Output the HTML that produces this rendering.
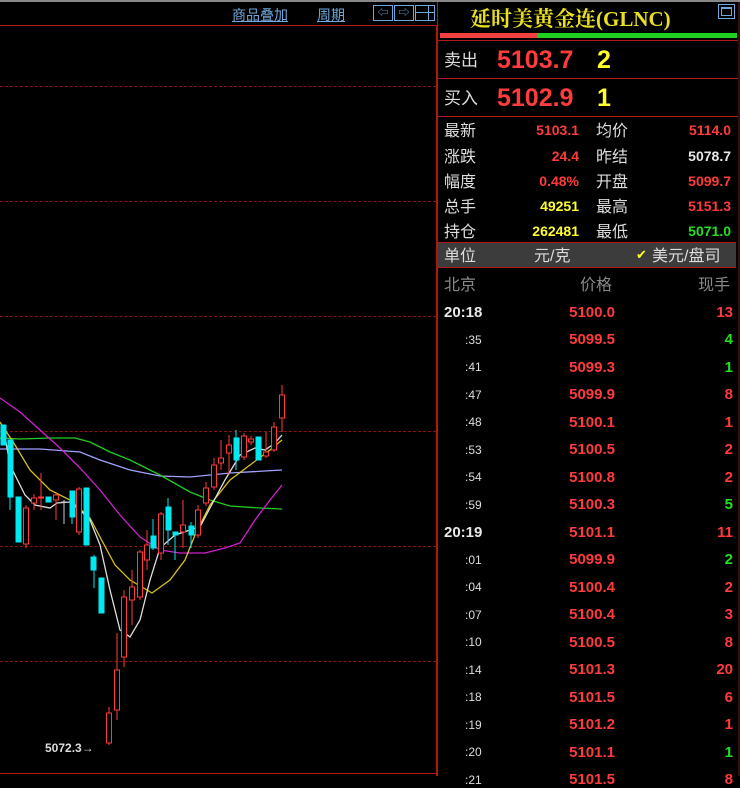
<!DOCTYPE html>
<html><head><meta charset="utf-8"><style>
body{margin:0;background:#000;width:740px;height:776px;overflow:hidden;position:relative;font-family:"Liberation Sans","Noto Sans CJK SC",sans-serif;}
.a{position:absolute;white-space:nowrap;}
.hl{position:absolute;height:0;border-top:1px dashed #8a1414;left:0;width:436px;}
.lab{font-size:16px;color:#ddd;margin-top:-3px}
.v{font-size:14px;font-weight:bold;text-align:right;}
.r{color:#ff3b3b}.y{color:#ffff2a}.g{color:#22e022}.w{color:#e8e8e8}
.t{font-size:12px;color:#ddd;left:465px;margin-top:2px}
.p{font-size:15px;font-weight:bold;color:#ff3b3b;width:120px;left:495px;text-align:right;margin-top:2px}
.q{font-size:15px;font-weight:bold;width:60px;left:673px;text-align:right;margin-top:2px}
.tm{left:444px;font-size:15px;font-weight:bold;color:#e8e8e8;margin-top:2px}
</style></head><body>
<div class="a" style="left:0;top:0;width:740px;height:2px;background:#888"></div>
<div class="a" style="left:232px;top:5px;font-size:14px;color:#6fa8dc;text-decoration:underline">商品叠加</div>
<div class="a" style="left:317px;top:5px;font-size:14px;color:#6fa8dc;text-decoration:underline">周期</div>
<div class="a" style="left:373px;top:5px;width:18px;height:14px;border:1px solid #6fa8dc;color:#6fa8dc;font-size:11px;line-height:14px;text-align:center">⇦</div>
<div class="a" style="left:394px;top:5px;width:18px;height:14px;border:1px solid #6fa8dc;color:#6fa8dc;font-size:11px;line-height:14px;text-align:center">⇨</div>
<div class="a" style="left:415px;top:5px;width:18px;height:14px;border:1px solid #6fa8dc"><div style="position:absolute;left:0;top:6px;width:18px;border-top:1px solid #6fa8dc"></div><div style="position:absolute;left:12px;top:0;height:14px;border-left:1px solid #6fa8dc"></div></div>
<div class="a" style="left:0;top:25px;width:437px;height:1px;background:#b01818"></div>
<div class="hl" style="top:86px"></div><div class="hl" style="top:201px"></div><div class="hl" style="top:316px"></div>
<div class="hl" style="top:431px"></div><div class="hl" style="top:546px"></div><div class="hl" style="top:661px"></div>
<div class="a" style="left:436px;top:25px;width:1px;height:751px;background:#b01818"></div>
<div class="a" style="left:0;top:773px;width:437px;height:1px;background:#b01818"></div>
<svg class="a" style="left:0;top:0" width="437" height="776">
<g fill="none" stroke-width="1.3">
<polyline stroke="#a0a0ff" points="0,449 40,449 80,452 100,460 130,470 160,476 190,477 230,473 282,470"/>
<polyline stroke="#22cc22" points="0,438 20,439 50,438 75,438 90,442 110,452 130,460 160,475 190,492 210,500 230,506 260,508 282,509"/>
<polyline stroke="#d020d0" points="0,398 20,412 40,430 60,448 80,468 100,490 120,515 140,537 160,550 180,553 205,553 225,548 240,543 255,520 270,500 282,485"/>
<polyline stroke="#d8c020" points="0,422 15,445 30,470 50,490 70,500 90,518 100,537 115,565 130,580 152,593 170,580 185,560 195,535 210,505 230,480 250,465 270,450 282,440"/>
<polyline stroke="#dddddd" points="3,425 10,465 25,495 35,505 50,508 57,503 70,502 80,510 90,520 100,545 110,590 120,630 130,637 140,620 150,580 160,548 175,535 190,530 200,527 210,508 225,480 240,455 255,448 265,450 275,443 282,435"/>
</g>
<g stroke="#ff3b3b" fill="#000">
<line x1="26" y1="505" x2="26" y2="548"/><rect x="23.5" y="508" width="5" height="36"/>
<line x1="34" y1="494" x2="34" y2="510"/><rect x="31.5" y="498" width="5" height="5"/>
<line x1="41" y1="473" x2="41" y2="510"/><rect x="38.5" y="497" width="5" height="1"/>
<line x1="56" y1="493" x2="56" y2="520"/><rect x="53.5" y="495" width="5" height="5"/>
<line x1="79" y1="487" x2="79" y2="535"/><rect x="76.5" y="489" width="5" height="43"/>
<line x1="109" y1="707" x2="109" y2="745"/><rect x="106.5" y="713" width="5" height="30"/>
<line x1="117" y1="633" x2="117" y2="720"/><rect x="114.5" y="670" width="5" height="40"/>
<line x1="124" y1="590" x2="124" y2="667"/><rect x="121.5" y="597" width="5" height="60"/>
<line x1="132" y1="570" x2="132" y2="625"/><rect x="129.5" y="587" width="5" height="13"/>
<line x1="140" y1="550" x2="140" y2="600"/><rect x="137.5" y="552" width="5" height="45"/>
<line x1="147" y1="530" x2="147" y2="570"/><rect x="144.5" y="545" width="5" height="15"/>
<line x1="161" y1="512" x2="161" y2="560"/><rect x="158.5" y="514" width="5" height="39"/>
<line x1="183" y1="500" x2="183" y2="548"/><rect x="180.5" y="525" width="5" height="7"/>
<line x1="198" y1="505" x2="198" y2="538"/><rect x="195.5" y="510" width="5" height="25"/>
<line x1="206" y1="482" x2="206" y2="506"/><rect x="203.5" y="488" width="5" height="15"/>
<line x1="214" y1="458" x2="214" y2="490"/><rect x="211.5" y="465" width="5" height="22"/>
<line x1="221" y1="440" x2="221" y2="470"/><rect x="218.5" y="458" width="5" height="5"/>
<line x1="229" y1="435" x2="229" y2="475"/><rect x="226.5" y="445" width="5" height="8"/>
<line x1="244" y1="433" x2="244" y2="460"/><rect x="241.5" y="436" width="5" height="21"/>
<line x1="251" y1="436" x2="251" y2="445"/><rect x="248.5" y="439" width="5" height="3"/>
<line x1="266" y1="432" x2="266" y2="458"/><rect x="263.5" y="452" width="5" height="4"/>
<line x1="274" y1="422" x2="274" y2="452"/><rect x="271.5" y="427" width="5" height="23"/>
<line x1="282" y1="385" x2="282" y2="432"/><rect x="279.5" y="395" width="5" height="23"/>
</g>
<g fill="#00e8f0" stroke="#00e8f0">
<rect x="1" y="425" width="5" height="20"/>
<line x1="10" y1="440" x2="10" y2="510"/><rect x="8" y="440" width="5" height="57"/>
<rect x="16" y="497" width="5" height="45"/>
<rect x="46" y="497" width="5" height="5"/>
<rect x="70" y="491" width="5" height="26"/><line x1="72" y1="517" x2="72" y2="524"/>
<rect x="84" y="488" width="5" height="57"/>
<line x1="94" y1="555" x2="94" y2="588"/><rect x="91" y="557" width="5" height="13"/>
<rect x="99" y="578" width="5" height="35"/>
<line x1="153" y1="519" x2="153" y2="550"/><rect x="151" y="536" width="5" height="12"/>
<line x1="168" y1="498" x2="168" y2="545"/><rect x="166" y="507" width="5" height="23"/>
<line x1="175" y1="532" x2="175" y2="560"/><rect x="173" y="532" width="5" height="3"/>
<line x1="191" y1="522" x2="191" y2="548"/><rect x="189" y="526" width="5" height="9"/>
<line x1="236" y1="430" x2="236" y2="470"/><rect x="234" y="438" width="5" height="22"/>
<rect x="256" y="437" width="5" height="23"/>
</g>
<line x1="64" y1="500" x2="64" y2="524" stroke="#ccc"/><line x1="61" y1="502" x2="67" y2="502" stroke="#ccc"/>
</svg>
<div class="a" style="left:45px;top:741px;font-size:12px;font-weight:bold;color:#ddd">5072.3→</div>
<div class="a" style="left:437px;top:2px;width:1px;height:774px;background:#b01818"></div>
<div class="a" style="left:738px;top:2px;width:2px;height:774px;background:#3a0a0a"></div>
<div class="a" style="left:470px;top:3px;font-size:21px;color:#e8e020;font-family:'Liberation Serif','Noto Serif CJK SC',serif;font-weight:bold">延时美黄金连(GLNC)</div>
<div class="a" style="left:718px;top:4px;width:15px;height:13px;border:1px solid #6fa8dc"><div style="margin:2px;height:6px;border:1px solid #6fa8dc;border-top-width:2px"></div></div>
<div class="a" style="left:440px;top:33px;width:97px;height:5px;background:#f04040"></div>
<div class="a" style="left:537px;top:33px;width:200px;height:5px;background:#20d020"></div>
<div class="a" style="left:438px;top:40px;width:300px;height:1px;background:#b01818"></div>
<div class="a" style="left:438px;top:78px;width:300px;height:1px;background:#b01818"></div>
<div class="a" style="left:438px;top:116px;width:300px;height:1px;background:#b01818"></div>
<div class="a lab" style="left:444px;top:49px;font-size:17px">卖出</div>
<div class="a r" style="left:497px;top:46px;font-size:25px;font-weight:bold">5103.7</div>
<div class="a y" style="left:597px;top:46px;font-size:25px;font-weight:bold">2</div>
<div class="a lab" style="left:444px;top:87px;font-size:17px">买入</div>
<div class="a r" style="left:497px;top:84px;font-size:25px;font-weight:bold">5102.9</div>
<div class="a y" style="left:597px;top:84px;font-size:25px;font-weight:bold">1</div>

<div class="a lab" style="left:444px;top:120px">最新</div><div class="a v r" style="left:499px;top:122px;width:80px">5103.1</div>
<div class="a lab" style="left:596px;top:120px">均价</div><div class="a v r" style="left:651px;top:122px;width:80px">5114.0</div>
<div class="a lab" style="left:444px;top:146px">涨跌</div><div class="a v r" style="left:499px;top:148px;width:80px">24.4</div>
<div class="a lab" style="left:596px;top:146px">昨结</div><div class="a v w" style="left:651px;top:148px;width:80px">5078.7</div>
<div class="a lab" style="left:444px;top:171px">幅度</div><div class="a v r" style="left:499px;top:173px;width:80px">0.48%</div>
<div class="a lab" style="left:596px;top:171px">开盘</div><div class="a v r" style="left:651px;top:173px;width:80px">5099.7</div>
<div class="a lab" style="left:444px;top:196px">总手</div><div class="a v y" style="left:499px;top:198px;width:80px">49251</div>
<div class="a lab" style="left:596px;top:196px">最高</div><div class="a v r" style="left:651px;top:198px;width:80px">5151.3</div>
<div class="a lab" style="left:444px;top:221px">持仓</div><div class="a v y" style="left:499px;top:223px;width:80px">262481</div>
<div class="a lab" style="left:596px;top:221px">最低</div><div class="a v g" style="left:651px;top:223px;width:80px">5071.0</div>

<div class="a" style="left:438px;top:242px;width:298px;height:24px;background:#3c3c3c;border-top:1px solid #b01818;border-bottom:1px solid #b01818"></div>
<div class="a lab" style="left:444px;top:245px">单位</div>
<div class="a lab" style="left:534px;top:245px">元/克</div>
<div class="a y" style="left:636px;top:247px;font-size:13px">✔</div>
<div class="a lab" style="left:652px;top:245px">美元/盘司</div>
<div class="a" style="left:444px;top:271px;font-size:16px;color:#888">北京</div>
<div class="a" style="left:580px;top:271px;font-size:16px;color:#888">价格</div>
<div class="a" style="left:698px;top:271px;font-size:16px;color:#888">现手</div>

<div class="a tm" style="top:302px">20:18</div><div class="a p" style="top:302px">5100.0</div><div class="a q r" style="top:302px">13</div>
<div class="a t" style="top:331px">:35</div><div class="a p" style="top:329px">5099.5</div><div class="a q g" style="top:329px">4</div>
<div class="a t" style="top:358px">:41</div><div class="a p" style="top:357px">5099.3</div><div class="a q g" style="top:357px">1</div>
<div class="a t" style="top:386px">:47</div><div class="a p" style="top:384px">5099.9</div><div class="a q r" style="top:384px">8</div>
<div class="a t" style="top:413px">:48</div><div class="a p" style="top:412px">5100.1</div><div class="a q r" style="top:412px">1</div>
<div class="a t" style="top:441px">:53</div><div class="a p" style="top:439px">5100.5</div><div class="a q r" style="top:439px">2</div>
<div class="a t" style="top:468px">:54</div><div class="a p" style="top:467px">5100.8</div><div class="a q r" style="top:467px">2</div>
<div class="a t" style="top:496px">:59</div><div class="a p" style="top:494px">5100.3</div><div class="a q g" style="top:494px">5</div>
<div class="a tm" style="top:522px">20:19</div><div class="a p" style="top:522px">5101.1</div><div class="a q r" style="top:522px">11</div>
<div class="a t" style="top:551px">:01</div><div class="a p" style="top:549px">5099.9</div><div class="a q g" style="top:549px">2</div>
<div class="a t" style="top:578px">:04</div><div class="a p" style="top:577px">5100.4</div><div class="a q r" style="top:577px">2</div>
<div class="a t" style="top:606px">:07</div><div class="a p" style="top:604px">5100.4</div><div class="a q r" style="top:604px">3</div>
<div class="a t" style="top:633px">:10</div><div class="a p" style="top:632px">5100.5</div><div class="a q r" style="top:632px">8</div>
<div class="a t" style="top:661px">:14</div><div class="a p" style="top:659px">5101.3</div><div class="a q r" style="top:659px">20</div>
<div class="a t" style="top:688px">:18</div><div class="a p" style="top:687px">5101.5</div><div class="a q r" style="top:687px">6</div>
<div class="a t" style="top:716px">:19</div><div class="a p" style="top:714px">5101.2</div><div class="a q r" style="top:714px">1</div>
<div class="a t" style="top:743px">:20</div><div class="a p" style="top:742px">5101.1</div><div class="a q g" style="top:742px">1</div>
<div class="a t" style="top:771px">:21</div><div class="a p" style="top:769px">5101.5</div><div class="a q r" style="top:769px">8</div>
</body></html>
